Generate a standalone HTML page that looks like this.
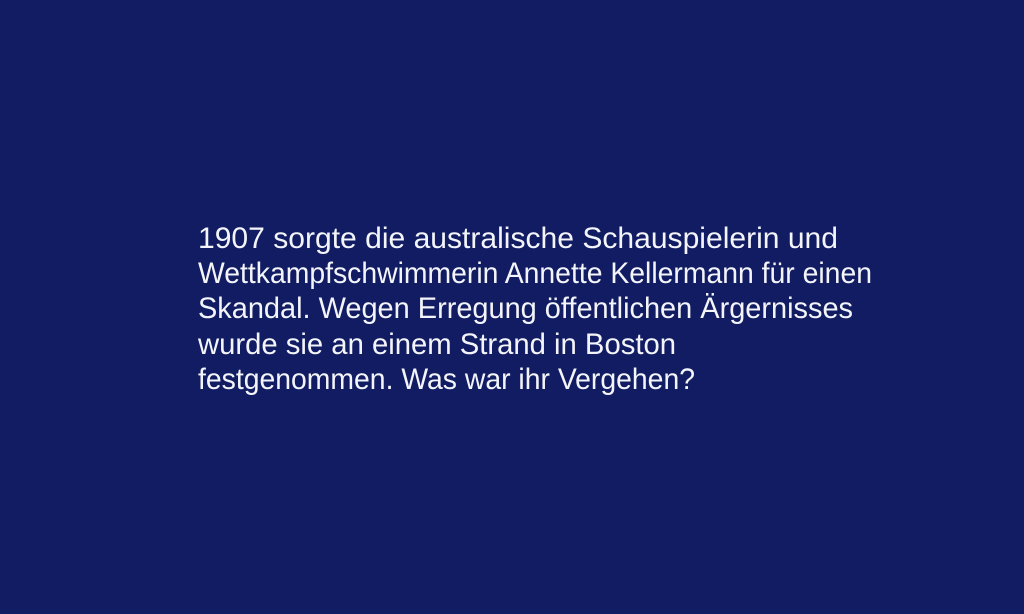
<!DOCTYPE html>
<html><head><meta charset="utf-8"><style>
html,body{margin:0;padding:0;background:#111c63;}
svg{display:block}
text{font-family:"Liberation Sans",sans-serif;font-size:30px;fill:#f4f5fa;font-weight:300}
</style></head><body>
<svg width="1024" height="614" viewBox="0 0 1024 614">
<rect width="1024" height="614" fill="#111c63"/>
<text x="198" y="248" textLength="640" lengthAdjust="spacingAndGlyphs">1907 sorgte die australische Schauspielerin und</text>
<text x="198" y="283" textLength="674" lengthAdjust="spacingAndGlyphs">Wettkampfschwimmerin Annette Kellermann für einen</text>
<text x="198" y="318" textLength="655" lengthAdjust="spacingAndGlyphs">Skandal. Wegen Erregung öffentlichen Ärgernisses</text>
<text x="198" y="354" textLength="478" lengthAdjust="spacingAndGlyphs">wurde sie an einem Strand in Boston</text>
<text x="198" y="389" textLength="497" lengthAdjust="spacingAndGlyphs">festgenommen. Was war ihr Vergehen?</text>
</svg>
</body></html>
